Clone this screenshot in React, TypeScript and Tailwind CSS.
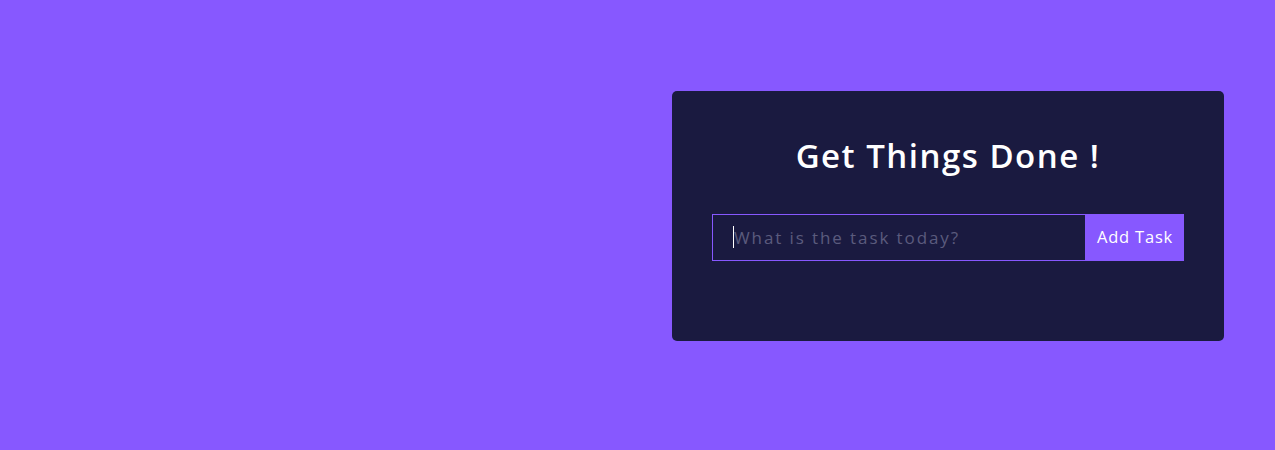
import React, { useState } from 'react';

const App: React.FC = () => {
  const [task, setTask] = useState('');

  const handleSubmit = (e: React.FormEvent) => {
    e.preventDefault();
    setTask('');
  };

  return (
    <div
      className="min-h-[450px] w-full bg-[#8758ff] flex justify-end pr-[51px] pt-[91px]"
      style={{ fontFamily: '"Open Sans", "Noto Sans", sans-serif' }}
    >
      <div className="w-[552px] h-[250px] bg-[#1a1a40] rounded-[5px] px-[40px] pt-[40px] flex flex-col items-center">
        <h1 className="text-[33px] leading-[50px] font-semibold text-white tracking-[1.5px]">
          Get Things Done !
        </h1>
        <form onSubmit={handleSubmit} className="mt-[33px] flex w-full h-[47px]">
          <div className="relative flex-1 h-full">
            <input
              type="text"
              value={task}
              onChange={(e) => setTask(e.target.value)}
              placeholder="What is the task today?"
              className="w-full h-full bg-transparent border border-[#8758ff] outline-none pl-[21px] pr-4 text-[17px] tracking-[1.9px] text-white placeholder:text-[#5b5b7d] caret-white"
            />
            {task === '' && (
              <span className="absolute left-[21px] top-[12px] w-px h-[22px] bg-white pointer-events-none" />
            )}
          </div>
          <button
            type="submit"
            className="w-[98px] h-full bg-[#8758ff] text-white text-[16.5px] tracking-[0.8px]"
          >
            Add Task
          </button>
        </form>
      </div>
    </div>
  );
};

export default App;
